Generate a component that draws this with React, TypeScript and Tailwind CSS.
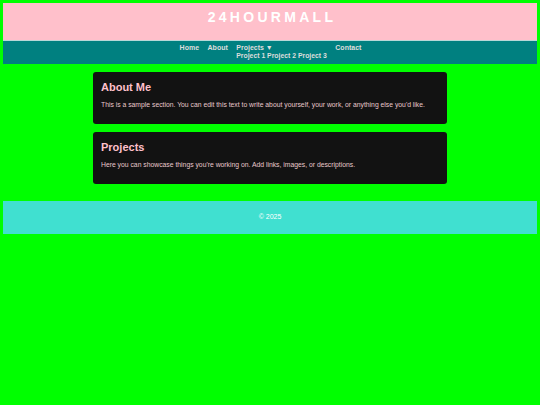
export default function App() {
  return (
    <div className="min-h-[405px] bg-[#00ff00] p-[3px] font-['Liberation_Sans',Arial,sans-serif]">
      {/* Header */}
      <header className="h-[37px] bg-[#ffc0cb] flex items-start justify-center pt-[7px]">
        <h1 className="text-white font-bold text-[14px] tracking-[3.3px] pl-[4px] leading-none">24HOURMALL</h1>
      </header>

      {/* Nav */}
      <nav className="h-[24px] bg-[#008080] border-t border-[#b8d8d8] flex justify-center pt-[3px]">
        <ul className="flex gap-[8.5px] text-[7px] font-bold text-[#dddddd] leading-[8px] pl-[1px]">
          <li>Home</li>
          <li>About</li>
          <li className="flex flex-col">
            <span>Projects ▼</span>
            <span className="text-[6.85px]">Project 1 Project 2 Project 3</span>
          </li>
          <li>Contact</li>
        </ul>
      </nav>

      {/* Sections */}
      <main className="w-[354px] mx-auto mt-[8px] flex flex-col gap-[8px]">
        <section className="bg-[#121212] rounded-[3px] px-[8px] pt-[9px] pb-[15px]">
          <h2 className="text-[#ffc0cb] font-bold text-[11px] leading-[13px]">About Me</h2>
          <p className="text-[#e8c8cc] text-[6.8px] mt-[7px] leading-[8px]">
            This is a sample section. You can edit this text to write about yourself, your work, or anything else you'd like.
          </p>
        </section>
        <section className="bg-[#121212] rounded-[3px] px-[8px] pt-[9px] pb-[15px]">
          <h2 className="text-[#ffc0cb] font-bold text-[11px] leading-[13px]">Projects</h2>
          <p className="text-[#e8c8cc] text-[6.8px] mt-[7px] leading-[8px]">
            Here you can showcase things you're working on. Add links, images, or descriptions.
          </p>
        </section>
      </main>

      {/* Footer */}
      <footer className="mt-[17px] h-[33px] bg-[#40e0d0] flex items-center justify-center">
        <span className="text-white text-[7px]">© 2025</span>
      </footer>
    </div>
  );
}
